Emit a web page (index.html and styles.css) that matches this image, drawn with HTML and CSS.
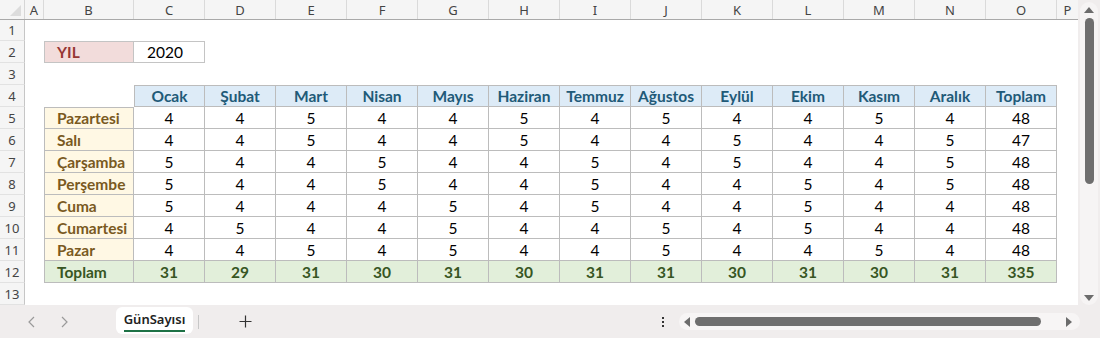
FILE: index.html
```html
<!DOCTYPE html>
<html lang="tr">
<head>
<meta charset="utf-8">
<title>GünSayısı</title>
<link rel="stylesheet" href="styles.css">
</head>
<body>
<div class="app">
  <div class="main">
    <div class="sheet">
      <div class="row hdr">
        <div class="corner"><span class="tri"></span></div>
        <div class="ch">A</div><div class="ch">B</div><div class="ch">C</div><div class="ch">D</div><div class="ch">E</div><div class="ch">F</div><div class="ch">G</div><div class="ch">H</div><div class="ch">I</div><div class="ch">J</div><div class="ch">K</div><div class="ch">L</div><div class="ch">M</div><div class="ch">N</div><div class="ch">O</div><div class="ch">P</div>
      </div>
      <div class="row r1"><div class="rh">1</div></div>
      <div class="row"><div class="rh">2</div><div></div><div class="yil">YIL</div><div class="year">2020</div></div>
      <div class="row"><div class="rh">3</div></div>
      <div class="row"><div class="rh">4</div><div></div><div></div>
        <div class="t mon first">Ocak</div><div class="t mon">Şubat</div><div class="t mon">Mart</div><div class="t mon">Nisan</div><div class="t mon">Mayıs</div><div class="t mon">Haziran</div><div class="t mon">Temmuz</div><div class="t mon">Ağustos</div><div class="t mon">Eylül</div><div class="t mon">Ekim</div><div class="t mon">Kasım</div><div class="t mon">Aralık</div><div class="t mon">Toplam</div>
      </div>
      <div class="row"><div class="rh">5</div><div></div><div class="t day top">Pazartesi</div>
        <div class="t">4</div><div class="t">4</div><div class="t">5</div><div class="t">4</div><div class="t">4</div><div class="t">5</div><div class="t">4</div><div class="t">5</div><div class="t">4</div><div class="t">4</div><div class="t">5</div><div class="t">4</div><div class="t">48</div>
      </div>
      <div class="row"><div class="rh">6</div><div></div><div class="t day">Salı</div>
        <div class="t">4</div><div class="t">4</div><div class="t">5</div><div class="t">4</div><div class="t">4</div><div class="t">5</div><div class="t">4</div><div class="t">4</div><div class="t">5</div><div class="t">4</div><div class="t">4</div><div class="t">5</div><div class="t">47</div>
      </div>
      <div class="row"><div class="rh">7</div><div></div><div class="t day">Çarşamba</div>
        <div class="t">5</div><div class="t">4</div><div class="t">4</div><div class="t">5</div><div class="t">4</div><div class="t">4</div><div class="t">5</div><div class="t">4</div><div class="t">5</div><div class="t">4</div><div class="t">4</div><div class="t">5</div><div class="t">48</div>
      </div>
      <div class="row"><div class="rh">8</div><div></div><div class="t day">Perşembe</div>
        <div class="t">5</div><div class="t">4</div><div class="t">4</div><div class="t">5</div><div class="t">4</div><div class="t">4</div><div class="t">5</div><div class="t">4</div><div class="t">4</div><div class="t">5</div><div class="t">4</div><div class="t">5</div><div class="t">48</div>
      </div>
      <div class="row"><div class="rh">9</div><div></div><div class="t day">Cuma</div>
        <div class="t">5</div><div class="t">4</div><div class="t">4</div><div class="t">4</div><div class="t">5</div><div class="t">4</div><div class="t">5</div><div class="t">4</div><div class="t">4</div><div class="t">5</div><div class="t">4</div><div class="t">4</div><div class="t">48</div>
      </div>
      <div class="row"><div class="rh">10</div><div></div><div class="t day">Cumartesi</div>
        <div class="t">4</div><div class="t">5</div><div class="t">4</div><div class="t">4</div><div class="t">5</div><div class="t">4</div><div class="t">4</div><div class="t">5</div><div class="t">4</div><div class="t">5</div><div class="t">4</div><div class="t">4</div><div class="t">48</div>
      </div>
      <div class="row"><div class="rh">11</div><div></div><div class="t day">Pazar</div>
        <div class="t">4</div><div class="t">4</div><div class="t">5</div><div class="t">4</div><div class="t">5</div><div class="t">4</div><div class="t">4</div><div class="t">5</div><div class="t">4</div><div class="t">4</div><div class="t">5</div><div class="t">4</div><div class="t">48</div>
      </div>
      <div class="row"><div class="rh">12</div><div></div><div class="t tot lbl">Toplam</div>
        <div class="t tot">31</div><div class="t tot">29</div><div class="t tot">31</div><div class="t tot">30</div><div class="t tot">31</div><div class="t tot">30</div><div class="t tot">31</div><div class="t tot">31</div><div class="t tot">30</div><div class="t tot">31</div><div class="t tot">30</div><div class="t tot">31</div><div class="t tot">335</div>
      </div>
      <div class="row"><div class="rh">13</div></div>
    </div>
    <div class="vscroll">
      <div class="vtrack">
        <span class="arr up"></span>
        <span class="vthumb"></span>
        <span class="vspace"></span>
        <span class="arr down"></span>
      </div>
    </div>
  </div>
  <div class="tabbar">
    <div class="nav">
      <svg width="10" height="12" viewBox="0 0 10 12"><path d="M7 1 L2 6 L7 11" fill="none" stroke="#9a9a9a" stroke-width="1.2"/></svg>
      <svg width="10" height="12" viewBox="0 0 10 12"><path d="M3 1 L8 6 L3 11" fill="none" stroke="#9a9a9a" stroke-width="1.2"/></svg>
    </div>
    <div class="tab"><span class="tabname">GünSayısı</span></div>
    <div class="sep"></div>
    <div class="plus">
      <svg width="13" height="13" viewBox="0 0 13 13"><path d="M6.5 0.5 V12.5 M0.5 6.5 H12.5" stroke="#333" stroke-width="1.2"/></svg>
    </div>
    <div class="grow"></div>
    <div class="dots"><span></span><span></span><span></span></div>
    <div class="hscroll">
      <span class="harr left"></span>
      <span class="hthumb"></span>
      <span class="hspace"></span>
      <span class="harr right"></span>
    </div>
  </div>
</div>
</body>
</html>
```

FILE: styles.css
```css
* { box-sizing: border-box; }
html, body { margin: 0; padding: 0; }
body {
  width: 1100px;
  height: 338px;
  overflow: hidden;
  background: #f0eded;
  font-family: Lato, "Liberation Sans", sans-serif;
}
.app { display: flex; flex-direction: column; width: 1100px; height: 338px; }
.main { display: flex; height: 305px; }
.sheet {
  width: 1078px;
  height: 305px;
  background: #fff;
  display: flex;
  flex-direction: column;
}
.row {
  display: grid;
  grid-template-columns: 25px 19px 90px repeat(13, 71px) 21px;
  height: 22px;
  font-size: 15.5px;
  color: #000;
}
.row.hdr {
  height: 20px;
  background: #f5f5f5;
  border-bottom: 1px solid #a9a9a9;
  font-family: "Noto Sans", "Open Sans", sans-serif;
  font-size: 13px;
  color: #444;
}
.row.r1 { height: 21px; }
.corner { position: relative; border-right: 1px solid #d6d6d6; }
.tri {
  position: absolute;
  right: 3px;
  bottom: 3px;
  width: 0; height: 0;
  border-left: 11px solid transparent;
  border-bottom: 11px solid #dcdcdc;
}
.ch {
  display: flex;
  align-items: center;
  justify-content: center;
  border-right: 1px solid #dadada;
}
.ch:last-child { border-right: none; }
.rh {
  background: #f5f5f5;
  border-right: 1px solid #c6c6c6;
  border-bottom: 1px solid #e2e2e2;
  display: flex;
  align-items: center;
  justify-content: center;
  font-family: "Noto Sans", "Open Sans", sans-serif;
  font-size: 13px;
  color: #444;
}
.yil {
  background: #f2dcdb;
  color: #963634;
  font-weight: 700;
  border: 1px solid #c4c4c4;
  display: flex;
  align-items: center;
  padding-left: 12px;
}
.year {
  border: 1px solid #c4c4c4;
  border-left: none;
  display: flex;
  align-items: center;
  padding-left: 13px;
}
.t {
  border-right: 1px solid #bcbcbc;
  border-bottom: 1px solid #bcbcbc;
  display: flex;
  align-items: center;
  justify-content: center;
}
.t.mon {
  background: #ddebf7;
  color: #215a78;
  font-weight: 700;
  border-top: 1px solid #bcbcbc;
}
.t.mon.first { border-left: 1px solid #bcbcbc; }
.t.day {
  background: #fff8e4;
  color: #7a5a1f;
  font-weight: 700;
  justify-content: flex-start;
  padding-left: 12px;
  border-left: 1px solid #bcbcbc;
}
.t.day.top { border-top: 1px solid #bcbcbc; }
.t.tot {
  background: #e2efda;
  color: #375623;
  font-weight: 700;
}
.t.tot.lbl {
  justify-content: flex-start;
  padding-left: 12px;
  border-left: 1px solid #bcbcbc;
}
.vscroll {
  width: 22px;
  height: 305px;
  padding: 2px 2px 0 2px;
}
.vtrack {
  height: 303px;
  background: #f6f4f4;
  border-radius: 9px;
  display: flex;
  flex-direction: column;
  align-items: center;
  padding: 5px 0 4px;
}
.arr { width: 0; height: 0; border-left: 5px solid transparent; border-right: 5px solid transparent; }
.arr.up { border-bottom: 6px solid #6c6c6c; }
.arr.down { border-top: 6px solid #6c6c6c; }
.vthumb {
  margin-top: 5px;
  width: 9px;
  height: 166px;
  background: #6e6e6e;
  border-radius: 5px;
}
.vspace { flex: 1; }
.tabbar {
  height: 33px;
  display: flex;
  align-items: center;
  padding-left: 27px;
}
.nav { display: flex; gap: 22px; width: 89px; align-items: center; }
.tab {
  width: 77px;
  height: 27px;
  margin-top: -3px;
  background: #fff;
  border-radius: 6px;
  display: flex;
  align-items: center;
  justify-content: center;
}
.tabname {
  font-family: "Noto Sans", "Open Sans", sans-serif;
  font-size: 13px;
  font-weight: 600;
  color: #222;
  padding-bottom: 2px;
  border-bottom: 2px solid #1e7145;
  line-height: 17px;
  margin-top: 2px;
}
.sep { width: 1px; height: 14px; background: #c7c7c7; margin-left: 5px; }
.plus { margin-left: 40px; display: flex; }
.grow { flex: 1; }
.dots { display: flex; flex-direction: column; gap: 2px; margin-right: 15px; }
.dots span { width: 2px; height: 2px; background: #333; }
.hscroll {
  width: 401px;
  height: 17px;
  background: #f7f5f5;
  border-radius: 9px;
  display: flex;
  align-items: center;
  padding: 0 8px 0 5px;
  margin-right: 20px;
}
.harr { width: 0; height: 0; border-top: 5px solid transparent; border-bottom: 5px solid transparent; }
.harr.left { border-right: 6px solid #6c6c6c; }
.harr.right { border-left: 6px solid #6c6c6c; }
.hthumb {
  margin-left: 5px;
  width: 346px;
  height: 9px;
  background: #6e6e6e;
  border-radius: 5px;
}
.hspace { flex: 1; }
```
